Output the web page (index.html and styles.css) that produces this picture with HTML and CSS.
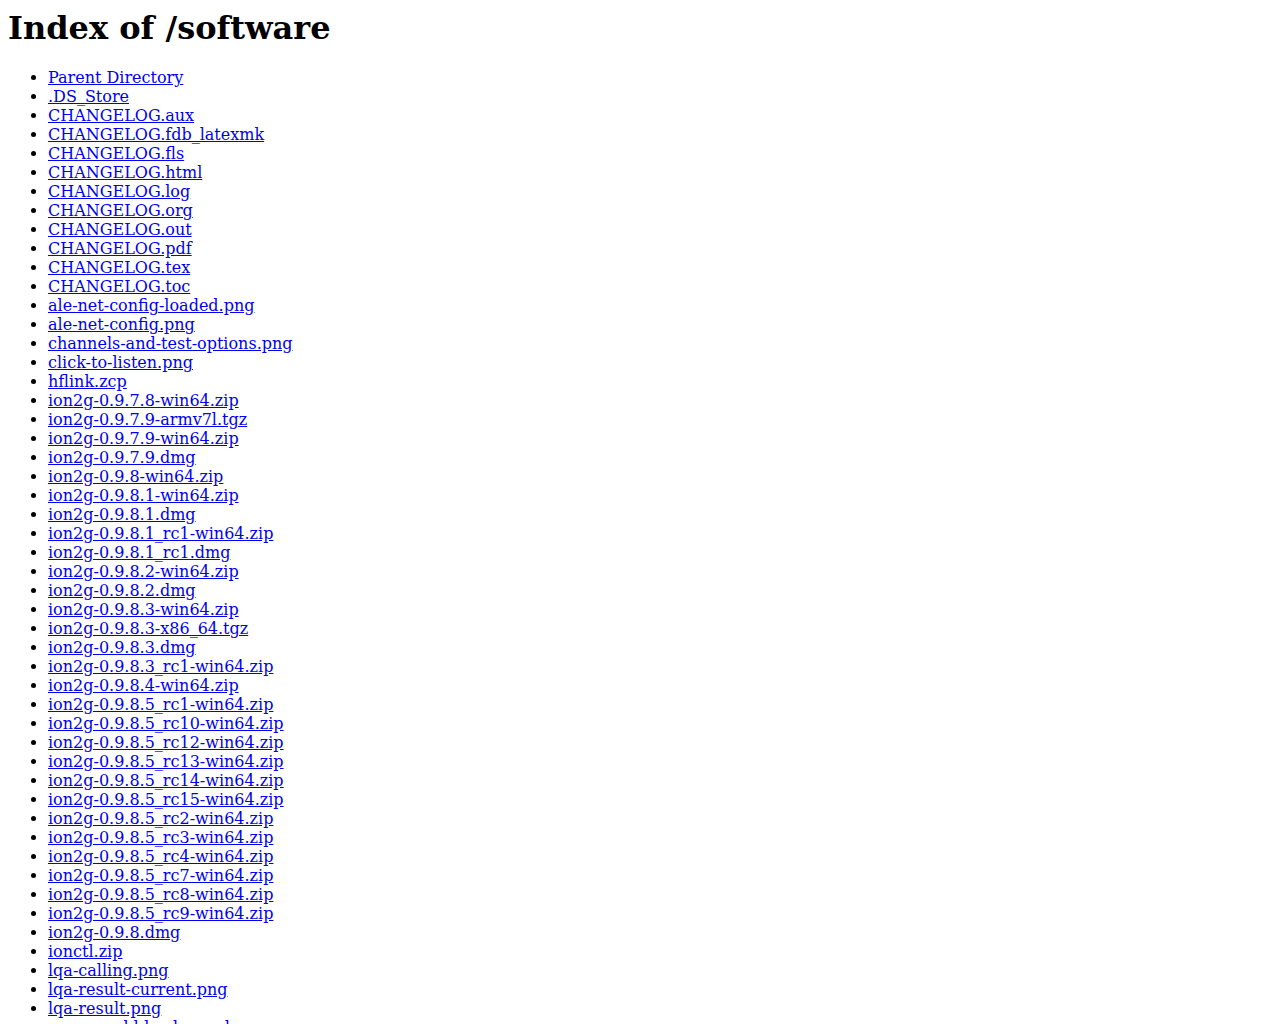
FILE: index.html
```html
<!DOCTYPE html>
<html>
<head>
<meta charset="utf-8">
<title>Index of /software</title>
<link rel="stylesheet" href="styles.css">
</head>
<body>
<h1 class="title">Index of /software</h1>
<ul class="listing">
<li><a href="/"> Parent Directory</a></li>
<li><a href=".DS_Store"> .DS_Store</a></li>
<li><a href="CHANGELOG.aux"> CHANGELOG.aux</a></li>
<li><a href="CHANGELOG.fdb_latexmk"> CHANGELOG.fdb_latexmk</a></li>
<li><a href="CHANGELOG.fls"> CHANGELOG.fls</a></li>
<li><a href="CHANGELOG.html"> CHANGELOG.html</a></li>
<li><a href="CHANGELOG.log"> CHANGELOG.log</a></li>
<li><a href="CHANGELOG.org"> CHANGELOG.org</a></li>
<li><a href="CHANGELOG.out"> CHANGELOG.out</a></li>
<li><a href="CHANGELOG.pdf"> CHANGELOG.pdf</a></li>
<li><a href="CHANGELOG.tex"> CHANGELOG.tex</a></li>
<li><a href="CHANGELOG.toc"> CHANGELOG.toc</a></li>
<li><a href="ale-net-config-loaded.png"> ale-net-config-loaded.png</a></li>
<li><a href="ale-net-config.png"> ale-net-config.png</a></li>
<li><a href="channels-and-test-options.png"> channels-and-test-options.png</a></li>
<li><a href="click-to-listen.png"> click-to-listen.png</a></li>
<li><a href="hflink.zcp"> hflink.zcp</a></li>
<li><a href="ion2g-0.9.7.8-win64.zip"> ion2g-0.9.7.8-win64.zip</a></li>
<li><a href="ion2g-0.9.7.9-armv7l.tgz"> ion2g-0.9.7.9-armv7l.tgz</a></li>
<li><a href="ion2g-0.9.7.9-win64.zip"> ion2g-0.9.7.9-win64.zip</a></li>
<li><a href="ion2g-0.9.7.9.dmg"> ion2g-0.9.7.9.dmg</a></li>
<li><a href="ion2g-0.9.8-win64.zip"> ion2g-0.9.8-win64.zip</a></li>
<li><a href="ion2g-0.9.8.1-win64.zip"> ion2g-0.9.8.1-win64.zip</a></li>
<li><a href="ion2g-0.9.8.1.dmg"> ion2g-0.9.8.1.dmg</a></li>
<li><a href="ion2g-0.9.8.1_rc1-win64.zip"> ion2g-0.9.8.1_rc1-win64.zip</a></li>
<li><a href="ion2g-0.9.8.1_rc1.dmg"> ion2g-0.9.8.1_rc1.dmg</a></li>
<li><a href="ion2g-0.9.8.2-win64.zip"> ion2g-0.9.8.2-win64.zip</a></li>
<li><a href="ion2g-0.9.8.2.dmg"> ion2g-0.9.8.2.dmg</a></li>
<li><a href="ion2g-0.9.8.3-win64.zip"> ion2g-0.9.8.3-win64.zip</a></li>
<li><a href="ion2g-0.9.8.3-x86_64.tgz"> ion2g-0.9.8.3-x86_64.tgz</a></li>
<li><a href="ion2g-0.9.8.3.dmg"> ion2g-0.9.8.3.dmg</a></li>
<li><a href="ion2g-0.9.8.3_rc1-win64.zip"> ion2g-0.9.8.3_rc1-win64.zip</a></li>
<li><a href="ion2g-0.9.8.4-win64.zip"> ion2g-0.9.8.4-win64.zip</a></li>
<li><a href="ion2g-0.9.8.5_rc1-win64.zip"> ion2g-0.9.8.5_rc1-win64.zip</a></li>
<li><a href="ion2g-0.9.8.5_rc10-win64.zip"> ion2g-0.9.8.5_rc10-win64.zip</a></li>
<li><a href="ion2g-0.9.8.5_rc12-win64.zip"> ion2g-0.9.8.5_rc12-win64.zip</a></li>
<li><a href="ion2g-0.9.8.5_rc13-win64.zip"> ion2g-0.9.8.5_rc13-win64.zip</a></li>
<li><a href="ion2g-0.9.8.5_rc14-win64.zip"> ion2g-0.9.8.5_rc14-win64.zip</a></li>
<li><a href="ion2g-0.9.8.5_rc15-win64.zip"> ion2g-0.9.8.5_rc15-win64.zip</a></li>
<li><a href="ion2g-0.9.8.5_rc2-win64.zip"> ion2g-0.9.8.5_rc2-win64.zip</a></li>
<li><a href="ion2g-0.9.8.5_rc3-win64.zip"> ion2g-0.9.8.5_rc3-win64.zip</a></li>
<li><a href="ion2g-0.9.8.5_rc4-win64.zip"> ion2g-0.9.8.5_rc4-win64.zip</a></li>
<li><a href="ion2g-0.9.8.5_rc7-win64.zip"> ion2g-0.9.8.5_rc7-win64.zip</a></li>
<li><a href="ion2g-0.9.8.5_rc8-win64.zip"> ion2g-0.9.8.5_rc8-win64.zip</a></li>
<li><a href="ion2g-0.9.8.5_rc9-win64.zip"> ion2g-0.9.8.5_rc9-win64.zip</a></li>
<li><a href="ion2g-0.9.8.dmg"> ion2g-0.9.8.dmg</a></li>
<li><a href="ionctl.zip"> ionctl.zip</a></li>
<li><a href="lqa-calling.png"> lqa-calling.png</a></li>
<li><a href="lqa-result-current.png"> lqa-result-current.png</a></li>
<li><a href="lqa-result.png"> lqa-result.png</a></li>
<li><a href="remove-old-backups.sh"> remove-old-backups.sh</a></li>
</ul>
</body>
</html>
```
FILE: styles.css
```css
body {
  margin: 0 8px 8px;
  font-family: "DejaVu Serif", serif;
  font-size: 16px;
  background: #ffffff;
  color: #000000;
}
.title {
  font-size: 32px;
  font-weight: bold;
  margin: 9px 0 21.44px;
}
.listing {
  margin: 16px 0;
  padding-left: 40px;
}
.listing a {
  color: #0000ee;
}
```
